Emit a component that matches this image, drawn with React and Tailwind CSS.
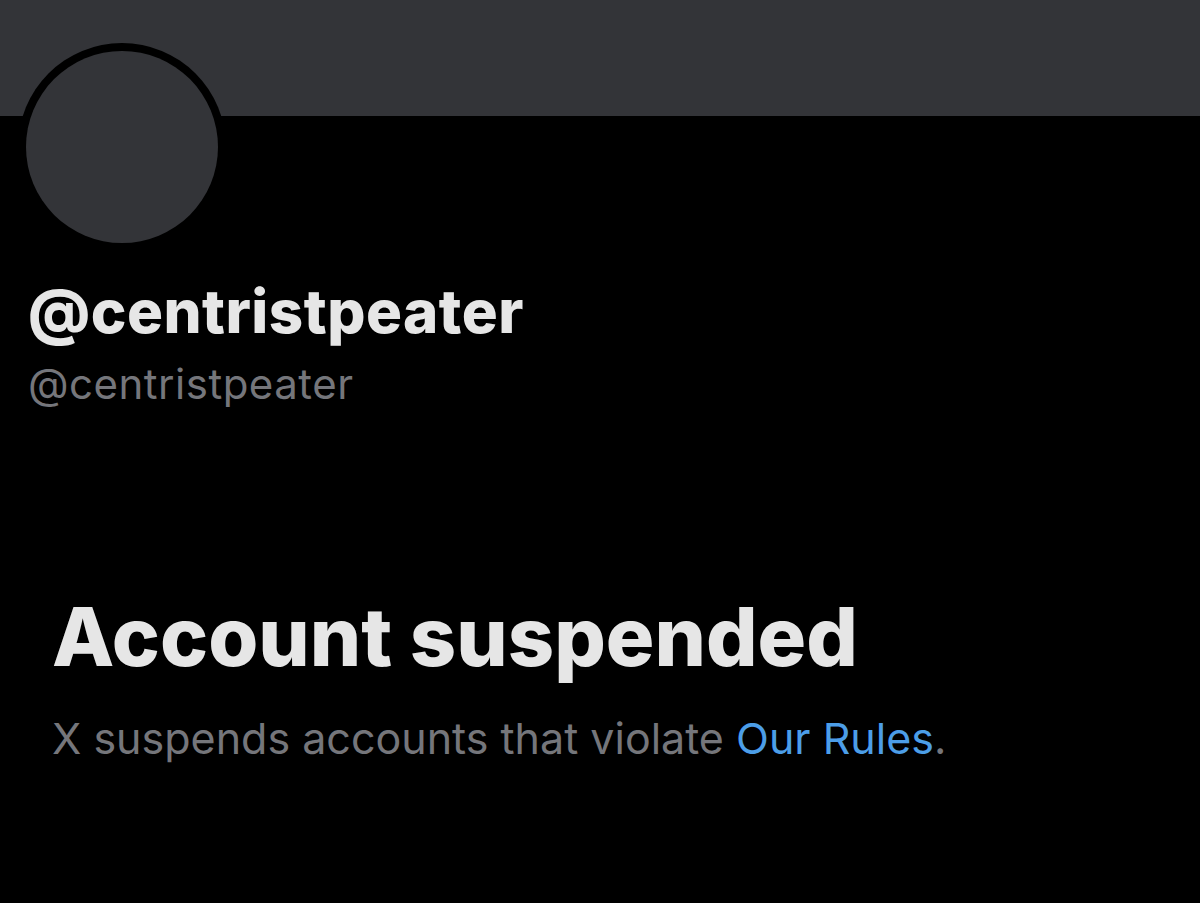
export default function App() {
  return (
    <div className="min-h-[903px] w-full bg-black text-[#e6e6e6] font-['Inter','Liberation_Sans',sans-serif]">
      {/* Banner */}
      <div className="h-[116px] bg-[#333438]" />

      {/* Avatar */}
      <div className="relative h-[159px]">
        <div className="absolute left-[18px] top-[-73px] h-[208px] w-[208px] rounded-full bg-black p-[8px]">
          <div className="h-full w-full rounded-full bg-[#333438]" />
        </div>
      </div>

      {/* Names */}
      <div className="px-[28px]">
        <div className="text-[60px] font-extrabold leading-[72px] tracking-[0.5px]">@centristpeater</div>
        <div className="mt-[12px] text-[42px] leading-[50px] tracking-[0.5px] text-[#75767b]">@centristpeater</div>
      </div>

      {/* Suspended */}
      <div className="px-[52px] pt-[180px]">
        <div className="text-[81px] font-extrabold leading-[96px]">Account suspended</div>
        <div className="mt-[27px] text-[43px] leading-[52px] text-[#75767b]">
          X suspends accounts that violate <span className="text-[#4c9ee8]">Our Rules</span>.
        </div>
      </div>
    </div>
  );
}
